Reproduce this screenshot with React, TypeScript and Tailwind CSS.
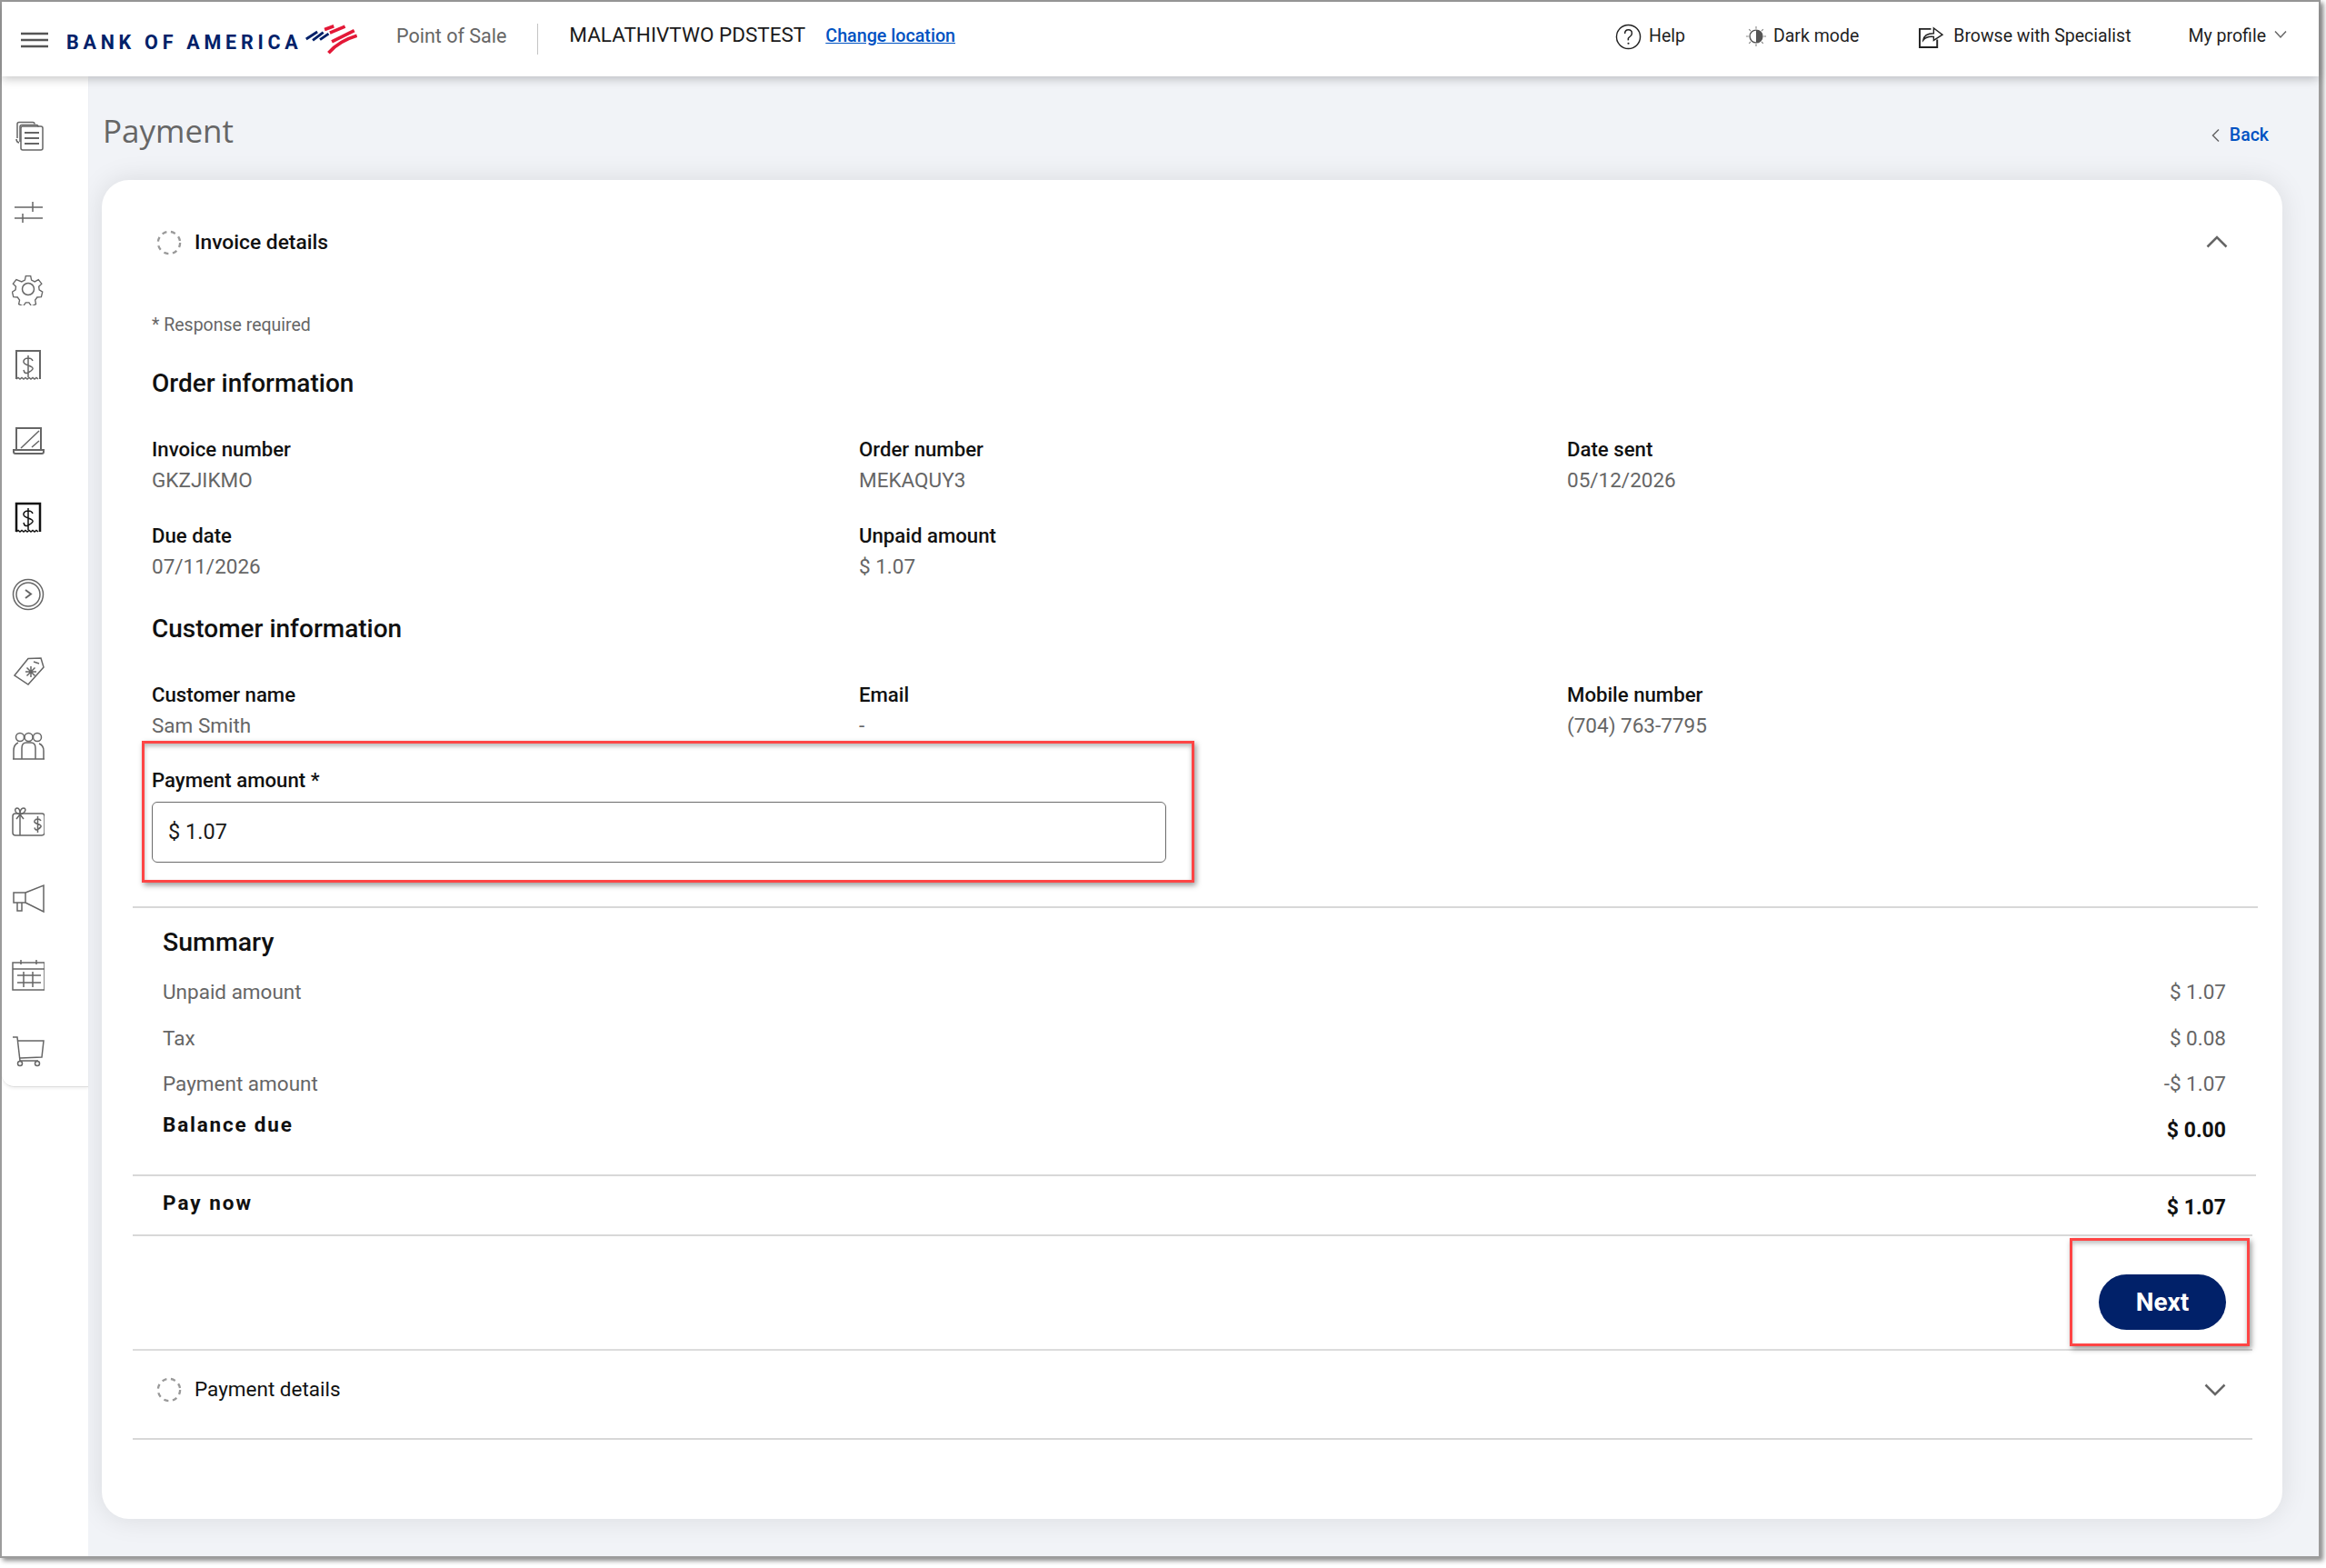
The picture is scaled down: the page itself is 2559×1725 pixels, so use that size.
import React from 'react';

const stroke = { fill: 'none', stroke: '#666666', strokeWidth: 1.5 };

// Left rail glyphs, drawn on a 36x36 box
const railIcons: React.ReactNode[] = [
  <g {...stroke} key="docs">
    <path d="M6 20V4.5q0-2 2-2h15q2 0 2 2" />
    <path d="M9 24V7.5q0-2 2-2h16q2 0 2 2" />
    <path d="M8 25q-3-.5-3-4" />
    <rect x="10" y="7" width="24" height="26" rx="2" />
    <path d="M14 14h16M14 20h16M14 26h16" strokeWidth="2" />
  </g>,
  <g {...stroke} key="sliders">
    <path d="M3 12h31M3 24h31M23 6v11M12 19v10" />
  </g>,
  <g {...stroke} key="gear">
    <circle cx="18" cy="18" r="6.5" />
    <path d="M15 2h6l1 5 4 2 4.500-2.500 4 5-3.500 3.500.5 4 4 2.500-1.500 6-5 .5-2.500 3.500 1 5-5.500 2.500-3-4.500h-4l-3 4.500-5.500-2.500 1-5-2.500-3.500-5-.5-1.500-6 4-2.500.5-4-3.500-3.500 4-5L10 9l4-2z" transform="translate(1.800 1.800) scale(.9)" />
  </g>,
  <g {...stroke} key="receipt">
    <path d="M5 33V2h26v31" strokeWidth="2" />
    <path d="M5 33l2-1.500 2 1.500 2-1.500 2 1.500 2-1.500 2 1.500 2-1.500 2 1.500 2-1.500 2 1.500 2-1.500 2 1.500" />
    <path d="M23 13q-1-3-5-3t-5 3 5 5 5 4-5 4-5-3M18 7v24" />
  </g>,
  <g {...stroke} key="laptop">
    <path d="M5 27V3h27v24" strokeWidth="2" />
    <path d="M2 27h33v2q0 2-2 2H4q-2 0-2-2z" strokeWidth="2" />
    <path d="M10 25L30 6M22 24l8-7" />
  </g>,
  <g fill="none" stroke="#111111" strokeWidth="1.500" key="receipt-active">
    <path d="M5 33V2h26v31" strokeWidth="2.500" />
    <path d="M5 33l2-1.500 2 1.500 2-1.500 2 1.500 2-1.500 2 1.500 2-1.500 2 1.500 2-1.500 2 1.500 2-1.500 2 1.500" />
    <path d="M23 13q-1-3-5-3t-5 3 5 5 5 4-5 4-5-3M18 7v24" />
  </g>,
  <g {...stroke} key="clock">
    <circle cx="18" cy="18" r="16.500" />
    <circle cx="18" cy="18" r="13" />
    <path d="M15 13l6 4.500-6 4.500" strokeWidth="2" />
  </g>,
  <g {...stroke} key="tag">
    <path d="M3 23L18 4.500 32 4l3 10-17 19z" />
    <path d="M24 8l6 2M21 13v12M15 19l12 0M16.500 14.500l9 9M25.500 14.500l-9 9" />
  </g>,
  <g {...stroke} key="people">
    <circle cx="9" cy="7" r="4.500" />
    <circle cx="18.500" cy="7" r="4.500" />
    <circle cx="28" cy="7" r="4.500" />
    <path d="M2 31v-9q0-7 5-9M35 31v-9q0-6-5-8" />
    <path d="M11 31V19q0-6 5-6h5q5 0 5 6v12M1 31h35" />
  </g>,
  <g {...stroke} key="gift">
    <rect x="1" y="7" width="35" height="24" rx="3" />
    <path d="M9 7v24" />
    <path d="M9 8C2 6 3 1 6 1s3 4 3 7c0-3 1-7 4-7s3 5-4 7zM9 8l-4 5M9 8l4 5" />
    <path d="M32 15q-1-2-3.500-2t-3.500 2 3.500 3.500 3.500 3-3.500 3-3.500-2M28.500 10v18" />
  </g>,
  <g {...stroke} key="megaphone">
    <rect x="2" y="10" width="13" height="11" />
    <path d="M15 10L35 2v29l-20-10M6 21v9h5v-9" />
  </g>,
  <g {...stroke} key="calendar">
    <rect x="1" y="3" width="35" height="30" />
    <path d="M1 10h35M10 0v5M27 0v5M6 17h26M6 25h26M13 13v17M23 13v17" />
  </g>,
  <g {...stroke} key="cart">
    <path d="M1 1h5l3 26h20" />
    <path d="M6 5h29l-2 18-24 1" />
    <circle cx="9" cy="30" r="2.500" />
    <circle cx="28" cy="30" r="2.500" />
  </g>,
];

const Label: React.FC<{ children: React.ReactNode }> = ({ children }) => (
  <div className="h-[34px] leading-[34px] text-[22.200px] font-medium text-[#111111]">{children}</div>
);

const Field: React.FC<{ label: string; value: string }> = ({ label, value }) => (
  <div>
    <Label>{label}</Label>
    <div className="h-[34px] leading-[34px] text-[22.500px] text-[#666666]">{value}</div>
  </div>
);

const DashedCircle = () => (
  <svg width="28" height="28" viewBox="0 0 30 30" className="shrink-0">
    <circle cx="15" cy="15" r="13" fill="none" stroke="#999999" strokeWidth="2.500" strokeDasharray="5.500 5" />
  </svg>
);

const SummaryRow: React.FC<{ label: string; value: string; className: string }> = ({ label, value, className }) => (
  <div className={`flex justify-between items-center pl-[33px] pr-[29px] text-[22.500px] text-[#666666] ${className}`}>
    <span>{label}</span>
    <span>{value}</span>
  </div>
);

const App = () => {
  return (
    <div className="w-[2559px] h-[1725px] bg-white overflow-hidden font-['Roboto',sans-serif]">
      <div className="w-[2553px] h-[1714px] flex flex-col bg-[#f1f3f7] border-2 border-[#9c9c9c] shadow-[3px_3px_5px_rgba(0,0,0,0.45)]">
        {/* Top bar */}
        <header className="h-[82px] shrink-0 pb-[6px] flex items-center bg-white shadow-[0_3px_10px_rgba(0,0,0,0.22)] relative z-20">
          <svg width="30" height="18" viewBox="0 0 30 18" className="ml-[21px] mt-[8px] shrink-0">
            <path d="M0 2h30M0 9h30M0 16h30" stroke="#555555" strokeWidth="2.500" />
          </svg>
          <span className="ml-[20px] mt-[14px] text-[21.500px] font-bold tracking-[4.750px] text-[#012169] whitespace-nowrap w-[262px]">BANK OF AMERICA</span>
          <svg width="58" height="49" viewBox="45 0 160 135" className="shrink-0 mt-[6px]">
            <path d="M50 66L84 44M70 70L102 46M92 68L118 50" stroke="#012169" strokeWidth="8" fill="none" />
            <path d="M106 37L134 27M122 47L168 28M128 74L196 40M118 108Q150 72 204 56" stroke="#e31837" strokeWidth="10" fill="none" />
          </svg>
          <span className="ml-[43px] text-[21.500px] text-[#666666] whitespace-nowrap">Point of Sale</span>
          <div className="ml-[34px] w-px h-[34px] bg-[#c4c4c4] mt-[6px]" />
          <span className="ml-[34px] text-[22.500px] text-[#1a1a1a] whitespace-nowrap -mt-[2px]">MALATHIVTWO PDSTEST</span>
          <a className="ml-[22px] text-[19.700px] font-medium text-[#0052c2] underline whitespace-nowrap">Change location</a>

          <div className="ml-auto flex items-center text-[19.500px] text-[#1f1f1f]">
            <svg width="29" height="29" viewBox="0 0 30 30" className="shrink-0">
              <circle cx="15" cy="15" r="13.500" fill="none" stroke="#222222" strokeWidth="1.500" />
              <path d="M11 11.500q0-4.500 4-4.500t4 4q0 2.500-2.500 4T15 19" fill="none" stroke="#222222" strokeWidth="1.500" />
              <circle cx="15" cy="22.500" r="1.100" fill="#222222" />
            </svg>
            <span className="ml-[8px]">Help</span>
            <svg width="24" height="24" viewBox="0 0 26 26" className="ml-[66px] shrink-0">
              <circle cx="13" cy="13" r="7.500" fill="none" stroke="#555555" strokeWidth="1.500" />
              <path d="M13 5.500a7.500 7.500 0 0 1 0 15z" fill="#555555" />
              <path d="M13 1v3M13 22v3M1 13h3M22 13h3M4.500 4.500l2 2M19.500 19.500l2 2M4.500 21.500l2-2M19.500 6.500l2-2" stroke="#888888" strokeWidth="1.200" />
            </svg>
            <span className="ml-[7px]">Dark mode</span>
            <svg width="29" height="25" viewBox="0 0 30 26" className="ml-[65px] shrink-0">
              <path d="M22 16v9H2V4h13" fill="none" stroke="#222222" strokeWidth="2" />
              <path d="M6 17q1-8 12-8V3l10 7.500L18 17v-4q-8-1-12 4z" fill="none" stroke="#222222" strokeWidth="1.500" />
            </svg>
            <span className="ml-[10px]">Browse with Specialist</span>
            <span className="ml-[63px]">My profile</span>
            <svg width="14" height="10" viewBox="0 0 14 10" className="ml-[9px] mb-[4px] shrink-0">
              <path d="M1 1.500l6 6.500 6-6.500" fill="none" stroke="#666666" strokeWidth="1.500" />
            </svg>
            <div className="w-[35px]" />
          </div>
        </header>

        <div className="flex-1 flex min-h-0">
          {/* Left rail */}
          <aside className="w-[95px] shrink-0 bg-white relative z-10">
            <nav className="h-[1112px] pt-[24px] flex flex-col items-start rounded-bl-[14px] border-b border-[#dddddd] shadow-[0_2px_3px_rgba(0,0,0,0.05)]">
              {railIcons.map((icon, i) => (
                <div key={i} className="h-[84px] shrink-0 w-full flex items-center pl-[11px]">
                  <svg width="36" height="36" viewBox="0 0 36 36">{icon}</svg>
                </div>
              ))}
            </nav>
          </aside>

          {/* Content */}
          <main className="flex-1 min-w-0 pl-[15px]">
            <div className="h-[114px] pr-[55px] pt-[35px] pl-[1px] flex justify-between items-start">
              <h1 className="text-[35px] leading-[50px] text-[#666666] font-['Open_Sans',sans-serif]">Payment</h1>
              <div className="flex items-center gap-[10px] mt-[15px] text-[19.500px] font-medium text-[#0052c2]">
                <svg width="11" height="16" viewBox="0 0 11 16">
                  <path d="M9 1.500L2.500 8 9 14.500" fill="none" stroke="#666666" strokeWidth="1.500" />
                </svg>
                <span>Back</span>
              </div>
            </div>

            <section className="w-[2399px] h-[1473px] bg-white rounded-[30px] shadow-[0_0_30px_rgba(0,0,0,0.1)] pt-[47px] pl-[34px] pr-[33px]">
              <div className="h-[44px] flex items-center pl-[26px]">
                <DashedCircle />
                <span className="ml-[14px] text-[22.800px] font-medium text-[#111111]">Invoice details</span>
                <svg width="24" height="14" viewBox="0 0 24 14" className="ml-auto mr-[27px] mb-[3px]">
                  <path d="M1.500 12.500L12 2l10.500 10.500" fill="none" stroke="#666666" strokeWidth="2.500" />
                </svg>
              </div>

              <div className="pl-[21px]">
                <p className="mt-[54px] h-[30px] leading-[30px] text-[19.500px] text-[#666666]">* Response required</p>
                <h2 className="mt-[31px] h-[36px] leading-[36px] text-[28px] font-medium text-[#111111]">Order information</h2>
                <div className="mt-[37px] grid grid-cols-[778px_779px_1fr] auto-rows-[95px]">
                  <Field label="Invoice number" value="GKZJIKMO" />
                  <Field label="Order number" value="MEKAQUY3" />
                  <Field label="Date sent" value="05/12/2026" />
                  <Field label="Due date" value="07/11/2026" />
                  <Field label="Unpaid amount" value="$ 1.07" />
                </div>
                <h2 className="mt-[7px] h-[36px] leading-[36px] text-[28px] font-medium text-[#111111]">Customer information</h2>
                <div className="mt-[37px] grid grid-cols-[778px_779px_1fr]">
                  <Field label="Customer name" value="Sam Smith" />
                  <Field label="Email" value="-" />
                  <Field label="Mobile number" value="(704) 763-7795" />
                </div>

                <div className="relative mt-[26px] w-[1116px]">
                  <Label>Payment amount *</Label>
                  <div className="mt-[7px] h-[67px] rounded-[6px] border-[1.500px] border-[#6b6b6b] flex items-center pl-[17px] text-[23.500px] text-[#1a1a1a]">$ 1.07</div>
                  <div className="absolute -left-[11px] -top-[26px] w-[1158px] h-[156px] border-[3px] border-[#ff4545] shadow-[2px_3px_6px_rgba(0,0,0,0.4),inset_0_3px_5px_rgba(0,0,0,0.28)]" />
                </div>
              </div>

              <div className="mt-[48px] -mr-[6px] h-[2px] bg-[#d8d8d8]" />
              <h2 className="pl-[33px] mt-[20px] h-[36px] leading-[36px] text-[28.500px] font-medium text-[#111111]">Summary</h2>
              <SummaryRow label="Unpaid amount" value="$ 1.07" className="mt-[21px] h-[32px]" />
              <SummaryRow label="Tax" value="$ 0.08" className="mt-[19px] h-[32px]" />
              <SummaryRow label="Payment amount" value="-$ 1.07" className="mt-[18px] h-[32px]" />
              <div className="mt-[12px] h-[36px] flex justify-between pl-[33px] pr-[29px] text-[#111111] font-bold">
                <span className="text-[22.500px] tracking-[1.800px] leading-[33px]">Balance due</span>
                <span className="text-[23px] leading-[46px]">$ 0.00</span>
              </div>

              <div className="mt-[35px] -mr-[4px] h-[2px] bg-[#d8d8d8]" />
              <div className="h-[64px] flex justify-between pl-[33px] pr-[29px] text-[#111111] font-bold">
                <span className="text-[22.500px] tracking-[2px] leading-[58px]">Pay now</span>
                <span className="text-[23px] leading-[70px]">$ 1.07</span>
              </div>
              <div className="h-[2px] bg-[#d8d8d8]" />

              <div className="relative h-[124px] flex justify-end pr-[29px] pt-[42px]">
                <button className="w-[140px] h-[61px] rounded-full bg-[#012169] text-white text-[28px] font-bold">Next</button>
                <div className="absolute right-[3px] top-[2px] w-[198px] h-[119px] border-[3px] border-[#ff4545] shadow-[2px_3px_6px_rgba(0,0,0,0.4),inset_0_3px_5px_rgba(0,0,0,0.25)]" />
              </div>
              <div className="h-[2px] bg-[#dcdcdc]" />

              <div className="h-[98px] pb-[10px] flex items-center pl-[26px] border-b-2 border-[#d8d8d8]">
                <DashedCircle />
                <span className="ml-[14px] text-[22.500px] text-[#111111] -mt-[1px]">Payment details</span>
                <svg width="24" height="14" viewBox="0 0 24 14" className="ml-auto mr-[29px]">
                  <path d="M1.500 1.500L12 12 22.500 1.500" fill="none" stroke="#666666" strokeWidth="2.500" />
                </svg>
              </div>
            </section>
          </main>
        </div>
      </div>
    </div>
  );
};

export default App;
